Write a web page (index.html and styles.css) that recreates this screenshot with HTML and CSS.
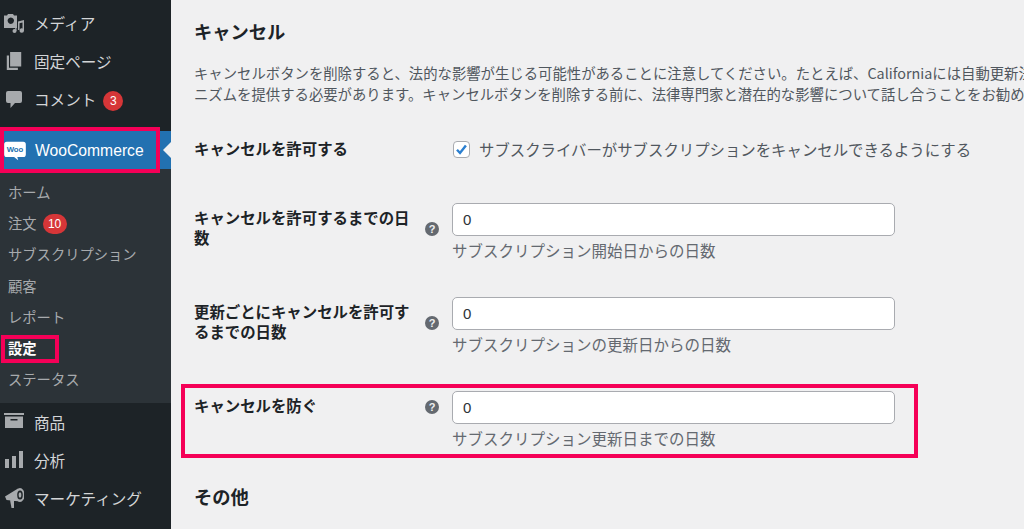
FILE: index.html
```html
<!DOCTYPE html>
<html lang="ja">
<head>
<meta charset="utf-8">
<title>キャンセル設定</title>
<link rel="stylesheet" href="styles.css">
</head>
<body>
<div class="page">
  <nav class="sidebar">
    <ul class="menu menu-top">
      <li class="item"><svg class="icon" viewBox="0 0 20 20"><path fill-rule="evenodd" d="M0 2.500h3l1-1.500h5l1 1.500h3V15H0zM6.800 4.500a3.200 3.200 0 1 0 .01 0z"/><path d="M14 8.500l6-1.500v10.500a2.200 2.200 0 1 1-1.500-2v-6l-3 .8v6.700h-1.500z"/><circle cx="10.500" cy="18" r="2"/><path d="M11.200 12v6h1.300v-6z"/></svg><span>メディア</span></li>
      <li class="item"><svg class="icon" viewBox="0.500 1 18 18"><path d="M6 15V2h10v13H6zm-1 1h8v2H3V5h2v11z"/></svg><span>固定ページ</span></li>
      <li class="item"><svg class="icon" viewBox="0 0 20 20"><path d="M4 2h12a2 2 0 0 1 2 2v8a2 2 0 0 1-2 2h-5l-4.500 5v-5H4a2 2 0 0 1-2-2V4a2 2 0 0 1 2-2z"/></svg><span>コメント</span><b class="badge badge-main">3</b></li>
    </ul>
    <div class="woo">
      <svg class="woo-logo" viewBox="0 0 24 21"><path fill="#fff" d="M3 .5h18A2.800 2.800 0 0 1 23.800 3.300v11A2.800 2.800 0 0 1 21 17.100h-6.500l1 3.400-4.500-3.400H3A2.800 2.800 0 0 1 .2 14.300v-11A2.800 2.800 0 0 1 3 .5z"/><text x="12" y="11.500" class="woo-mark">Woo</text></svg>
      <span>WooCommerce</span>
    </div>
    <ul class="menu submenu">
      <li>ホーム</li>
      <li>注文<b class="badge badge-sub">10</b></li>
      <li>サブスクリプション</li>
      <li>顧客</li>
      <li>レポート</li>
      <li class="current">設定</li>
      <li>ステータス</li>
    </ul>
    <ul class="menu menu-bottom">
      <li class="item"><svg class="icon" viewBox="0 0 20 20"><path d="M0 1h20v2H0z"/><path fill-rule="evenodd" d="M1 4.500h18V16H1zM6.500 7v1.500h7V7z"/></svg><span>商品</span></li>
      <li class="item"><svg class="icon" viewBox="0 0 20 20"><path d="M1 9h4v9H1zM8 6h4v12H8zM15 1h4v17h-4z"/></svg><span>分析</span></li>
      <li class="item"><svg class="icon" viewBox="0 0 20 20"><path d="M1 8.500L14 .5l2 13-13.500-1.500zM6 12l4 .5V20H7.500z"/><ellipse cx="16" cy="7" rx="4.500" ry="7"/><ellipse class="icon-cut" cx="16" cy="7" rx="2.800" ry="4.600"/><ellipse cx="16" cy="7" rx="1.400" ry="2.800"/></svg><span>マーケティング</span></li>
    </ul>
  </nav>
  <main class="content">
    <h2 class="heading">キャンセル</h2>
    <p class="desc">キャンセルボタンを削除すると、法的な影響が生じる可能性があることに注意してください。たとえば、Californiaには自動更新法があり、簡単なキャンセルメカ<br>ニズムを提供する必要があります。キャンセルボタンを削除する前に、法律専門家と潜在的な影響について話し合うことをお勧めします。</p>
    <div class="row row-check">
      <div class="label">キャンセルを許可する</div>
      <div class="help"></div>
      <div class="field check-field">
        <span class="checkbox"><svg viewBox="0 0 16 16"><path d="M3.200 8.300l3.200 3.400 6.300-8" fill="none" stroke="#2a7fd0" stroke-width="2.600"/></svg></span>
        <span>サブスクライバーがサブスクリプションをキャンセルできるようにする</span>
      </div>
    </div>
    <div class="row row-days">
      <div class="label">キャンセルを許可するまでの日数</div>
      <div class="help"><span class="help-tip">?</span></div>
      <div class="field"><div class="input">0</div><div class="hint">サブスクリプション開始日からの日数</div></div>
    </div>
    <div class="row row-days">
      <div class="label">更新ごとにキャンセルを許可するまでの日数</div>
      <div class="help"><span class="help-tip">?</span></div>
      <div class="field"><div class="input">0</div><div class="hint">サブスクリプションの更新日からの日数</div></div>
    </div>
    <div class="row row-days">
      <div class="label">キャンセルを防ぐ</div>
      <div class="help help-single"><span class="help-tip">?</span></div>
      <div class="field"><div class="input">0</div><div class="hint">サブスクリプション更新日までの日数</div></div>
    </div>
    <h2 class="heading heading-other">その他</h2>
  </main>
  <div class="mark mark-woo"></div>
  <div class="mark mark-settings"></div>
  <div class="mark mark-row"></div>
</div>
</body>
</html>
```
FILE: styles.css
```css
* { box-sizing: border-box; }
html, body { margin: 0; height: 100%; overflow: hidden; }
body { background: #f0f0f1; font-family: "Noto Sans CJK JP", "Liberation Sans", sans-serif; color: #3c434a; }
.page { position: relative; display: flex; width: 1024px; height: 529px; overflow: hidden; }
.sidebar { flex: none; width: 171px; height: 529px; background: #1d2327; color: #d3d5d7; margin-right: 1px; }
.menu { list-style: none; margin: 0; padding: 0; }
.menu-top { padding-top: 4px; height: 131px; }
.item { display: flex; align-items: center; height: 38px; font-size: 15.600px; white-space: nowrap; }
.icon { flex: none; width: 20px; height: 20px; margin: 0 10px 0 4px; fill: #a7aaad; }
.icon-cut { fill: #1d2327; }
.badge { display: inline-flex; align-items: center; justify-content: center; height: 20px; border-radius: 10px; background: #d63638; color: #fff; font-size: 12px; font-weight: 400; font-family: "Liberation Sans", sans-serif; }
.badge-main { width: 20px; margin: 4px 0 0 7px; }
.badge-sub { width: 24px; margin: 3px 0 0 6px; }
.woo { position: relative; display: flex; align-items: center; height: 38px; padding-top: 1px; background: #2271b1; color: #fff; font-size: 15.700px; font-family: "Liberation Sans", sans-serif; white-space: nowrap; }
.woo::after { content: ""; position: absolute; right: -1px; top: 10px; border: 9px solid transparent; border-left: 0; border-right-color: #f0f0f1; }
.woo-logo { flex: none; width: 22px; height: 20px; margin: 0 9px 0 4px; }
.woo-mark { font: 700 8.500px "Liberation Sans", sans-serif; fill: #2271b1; text-anchor: middle; }
.submenu { background: #2c3338; color: #a7aaad; font-size: 14.300px; padding: 7px 0 0; height: 234px; }
.submenu li { display: flex; align-items: center; height: 31.200px; padding-left: 8px; }
.submenu .current { color: #fff; font-weight: 700; }
.content { flex: 1; min-width: 0; padding: 0 0 0 22px; overflow: hidden; }
.heading { margin: 18px 0 0; font-size: 18.300px; line-height: 27px; font-weight: 700; color: #1d2327; white-space: nowrap; }
.desc { margin: 17px 0 0; font-size: 14.370px; line-height: 21px; color: #50575e; white-space: nowrap; }
.row { display: flex; font-size: 15.400px; line-height: 20px; }
.label { flex: none; width: 220px; font-weight: 700; color: #1d2327; }
.help { flex: none; width: 38px; padding: 19px 0 0 11px; }
.help-single { padding-top: 9px; }
.help-tip { display: flex; align-items: center; justify-content: center; width: 14px; height: 14px; border-radius: 50%; background: #646970; color: #f0f0f1; font: 700 11px "Liberation Sans", sans-serif; }
.field { flex: none; width: 443px; }
.row-check { margin-top: 34px; height: 22px; align-items: center; }
.row-check .label { padding-bottom: 2px; }
.check-field { display: flex; align-items: center; gap: 9px; width: 560px; color: #50575e; font-size: 15.400px; white-space: nowrap; }
.checkbox { flex: none; margin-left: 1px; width: 17px; height: 17px; border: 1px solid #a9abb0; border-radius: 4px; background: #fff; }
.checkbox svg { display: block; width: 15px; height: 15px; }
.row-days { margin-top: 42px; height: 52px; }
.row-check + .row-days { margin-top: 43px; }
.row-days .label { padding-top: 4px; }
.input { height: 33px; padding-left: 10px; border: 1px solid #a9abb0; border-radius: 5px; background: #fff; color: #2c3338; font-size: 15px; line-height: 31px; font-family: "Liberation Sans", sans-serif; }
.hint { margin-top: 4px; font-size: 15.500px; color: #646970; white-space: nowrap; }
.heading-other { margin-top: 40px; }
.mark { position: absolute; border: 4px solid #f50057; pointer-events: none; }
.mark-woo { left: 0; top: 127px; width: 160px; height: 46px; }
.mark-settings { left: 1px; top: 335px; width: 58px; height: 28px; }
.mark-row { left: 181px; top: 384px; width: 737px; height: 74px; }
```
